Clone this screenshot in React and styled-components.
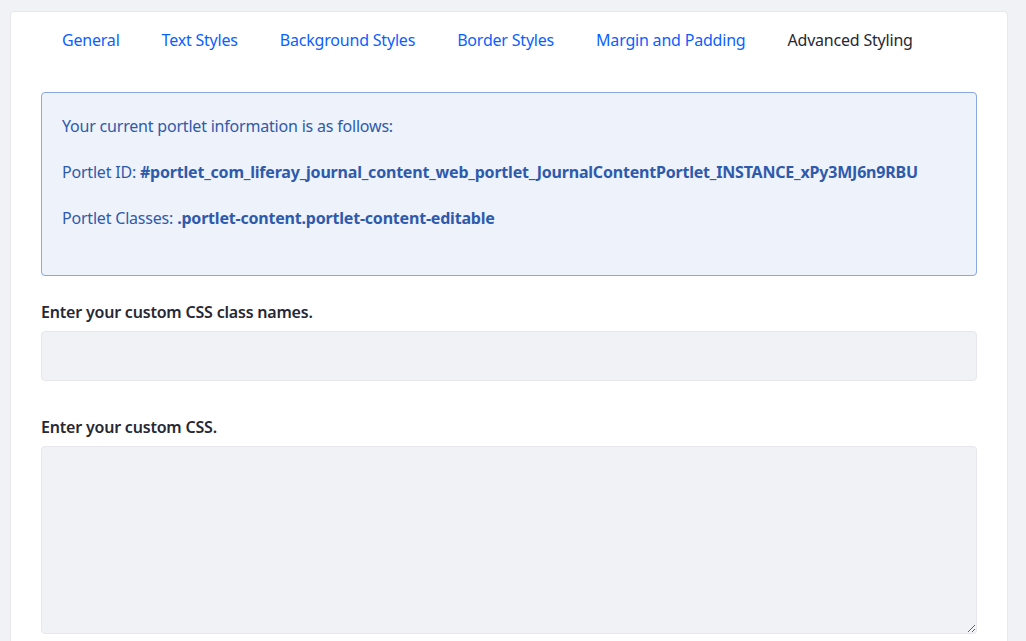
import React from "react";
import styled, { createGlobalStyle } from "styled-components";

const Global = createGlobalStyle`
  body { margin: 0; background: #f1f2f5; font-family: "Noto Sans", "Open Sans", sans-serif; }
`;
const Page = styled.div`padding: 11px 18px 0 10px;`;
const Card = styled.div`
  background: #fff; border: 1px solid #e7e7ed; border-radius: 4px;
  padding: 0 30px 20px; height: 640px; box-sizing: border-box;
`;
const Nav = styled.nav`display: flex; height: 56px; align-items: center; margin-bottom: 24px;`;
const Tab = styled.a`
  padding: 0 21px; font-size: 16px; color: ${p => (p.$active ? "#272833" : "#0b5fff")};
  letter-spacing: -0.2px; cursor: pointer;
`;
const Alert = styled.div`
  background: #eef2fa; border: 1px solid #89a7e0; border-radius: 4px;
  color: #2e5aac; padding: 22px 20px 24px; font-size: 16px;
  display: flex; flex-direction: column; gap: 24px; line-height: 22px; letter-spacing: -0.2px;
  height: 184px; box-sizing: border-box;
`;
const Strong = styled.b`font-weight: 700;`;
const Group = styled.div`margin-top: ${p => p.$mt}px;`;
const Label = styled.label`display: block; font-size: 16px; font-weight: 600; color: #272833; margin-bottom: 8px; letter-spacing: -0.2px;`;
const Input = styled.div`
  background: #f1f2f5; border: 1px solid #e7e7ed; border-radius: 4px; height: ${p => p.$h}px; box-sizing: border-box;
`;
const TextArea = styled.textarea`
  display: block; width: 100%; background: #f1f2f5; border: 1px solid #e7e7ed; border-radius: 4px;
  height: 188px; box-sizing: border-box; resize: vertical;
`;

export default function App() {
  const tabs = ["General", "Text Styles", "Background Styles", "Border Styles", "Margin and Padding", "Advanced Styling"];
  return (
    <Page>
      <Global />
      <Card>
        <Nav>{tabs.map((t, i) => <Tab key={t} $active={i === 5}>{t}</Tab>)}</Nav>
        <Alert>
          <div>Your current portlet information is as follows:</div>
          <div>Portlet ID: <Strong>#portlet_com_liferay_journal_content_web_portlet_JournalContentPortlet_INSTANCE_xPy3MJ6n9RBU</Strong></div>
          <div>Portlet Classes: <Strong>.portlet-content.portlet-content-editable</Strong></div>
        </Alert>
        <Group $mt={25}>
          <Label>Enter your custom CSS class names.</Label>
          <Input $h={50} />
        </Group>
        <Group $mt={35}>
          <Label>Enter your custom CSS.</Label>
          <TextArea />
        </Group>
      </Card>
    </Page>
  );
}
